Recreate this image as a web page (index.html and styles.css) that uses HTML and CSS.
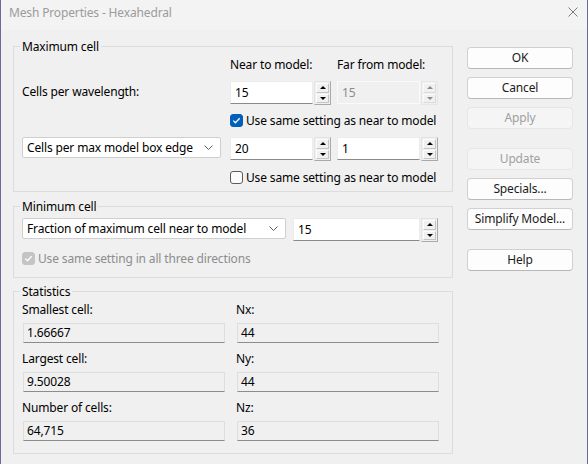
FILE: index.html
```html
<!DOCTYPE html>
<html>
<head>
<meta charset="utf-8">
<title>Mesh Properties - Hexahedral</title>
<link rel="stylesheet" href="styles.css">
</head>
<body>
<div class="window">
  <div class="titlebar">
    <span class="title">Mesh Properties - Hexahedral</span>
    <svg class="close" width="10" height="10" viewBox="0 0 10 10"><path d="M0.5 0.5L9.5 9.5M9.5 0.5L0.5 9.5" stroke="#7c7c7c" stroke-width="1" fill="none"/></svg>
  </div>
  <div class="content">
    <div class="groups">
      <fieldset class="group g-max">
        <legend>Maximum cell</legend>
        <div class="max-grid">
          <div></div>
          <div class="hdr">Near to model:</div>
          <div class="hdr">Far from model:</div>

          <div class="lbl">Cells per wavelength:</div>
          <div class="spin">
            <div class="edit">15</div>
            <div class="spinbtns"><span class="sb"><i class="up"></i></span><span class="sb"><i class="down"></i></span></div>
          </div>
          <div class="spin disabled">
            <div class="edit">15</div>
            <div class="spinbtns"><span class="sb"><i class="up"></i></span><span class="sb"><i class="down"></i></span></div>
          </div>

          <div></div>
          <div class="check span2">
            <span class="box on"><svg width="11" height="11" viewBox="0 0 11 11"><path d="M2.3 5.6L4.4 7.7L8.7 3.2" stroke="#fff" stroke-width="1.3" fill="none"/></svg></span>
            <span>Use same setting as near to model</span>
          </div>

          <div class="combo w199">
            <span>Cells per max model box edge</span>
            <svg width="9" height="5" viewBox="0 0 9 5"><path d="M0.5 0.5L4.5 4.5L8.5 0.5" stroke="#5f5f5f" fill="none"/></svg>
          </div>
          <div class="spin">
            <div class="edit">20</div>
            <div class="spinbtns"><span class="sb"><i class="up"></i></span><span class="sb"><i class="down"></i></span></div>
          </div>
          <div class="spin">
            <div class="edit">1</div>
            <div class="spinbtns"><span class="sb"><i class="up"></i></span><span class="sb"><i class="down"></i></span></div>
          </div>

          <div></div>
          <div class="check span2">
            <span class="box"></span>
            <span>Use same setting as near to model</span>
          </div>
        </div>
      </fieldset>

      <fieldset class="group g-min">
        <legend>Minimum cell</legend>
        <div class="min-grid">
          <div class="combo w264">
            <span>Fraction of maximum cell near to model</span>
            <svg width="9" height="5" viewBox="0 0 9 5"><path d="M0.5 0.5L4.5 4.5L8.5 0.5" stroke="#5f5f5f" fill="none"/></svg>
          </div>
          <div class="spin wide">
            <div class="edit">15</div>
            <div class="spinbtns"><span class="sb"><i class="up"></i></span><span class="sb"><i class="down"></i></span></div>
          </div>
          <div class="check dis span2">
            <span class="box on"><svg width="11" height="11" viewBox="0 0 11 11"><path d="M2.3 5.6L4.4 7.7L8.7 3.2" stroke="#fff" stroke-width="1.3" fill="none"/></svg></span>
            <span>Use same setting in all three directions</span>
          </div>
        </div>
      </fieldset>

      <fieldset class="group g-stats">
        <legend>Statistics</legend>
        <div class="stats-grid">
          <div class="stat"><div class="lbl">Smallest cell:</div><div class="ro">1.66667</div></div>
          <div class="stat"><div class="lbl">Nx:</div><div class="ro">44</div></div>
          <div class="stat"><div class="lbl">Largest cell:</div><div class="ro">9.50028</div></div>
          <div class="stat"><div class="lbl">Ny:</div><div class="ro">44</div></div>
          <div class="stat"><div class="lbl">Number of cells:</div><div class="ro">64,715</div></div>
          <div class="stat"><div class="lbl">Nz:</div><div class="ro">36</div></div>
        </div>
      </fieldset>
    </div>

    <div class="buttons">
      <div class="btn">OK</div>
      <div class="btn">Cancel</div>
      <div class="btn disabled">Apply</div>
      <div class="btn disabled sep">Update</div>
      <div class="btn">Specials...</div>
      <div class="btn">Simplify Model...</div>
      <div class="btn sep">Help</div>
    </div>
  </div>
</div>
</body>
</html>
```
FILE: styles.css
```css
* { box-sizing: border-box; }
html, body { margin: 0; padding: 0; }
body {
  font-family: "Noto Sans", "Open Sans", sans-serif;
  font-size: 12px;
  letter-spacing: -0.15px;
  color: #000;
  background: #f0f0f0;
}
.window {
  width: 588px;
  height: 464px;
  background: #f0f0f0;
  border-left: 1px solid #6d6a9a;
  border-right: 1px solid #6d6a9a;
  display: flex;
  flex-direction: column;
}
.titlebar {
  height: 30px;
  flex: none;
  background: #f3f3f3;
  display: flex;
  align-items: center;
  justify-content: space-between;
  padding: 0 9px 0 8px;
  color: #9b9b9b;
}
.title { line-height: 16px; margin-top: -4px; }
.close { margin-top: -6px; }

.content {
  display: flex;
  gap: 14px;
  padding: 8px 0 0 12px;
}
.groups {
  width: 440px;
  display: flex;
  flex-direction: column;
}
fieldset.group {
  margin: 0;
  min-width: 0;
  border: 1px solid #dcdcdc;
  padding: 2px 8px 7px 8px;
}
fieldset.group legend {
  padding: 0 2px;
  margin-left: -2px;
  height: 17px;
  line-height: 17px;
}
.g-min { margin-top: 6px !important; padding: 3px 8px 12px 8px !important; }
.g-stats { margin-top: 5px !important; padding: 2px 8px 12px 8px !important; }

.lbl, .hdr { line-height: 16px; height: 16px; white-space: nowrap; }

/* Maximum cell grid */
.max-grid {
  display: grid;
  grid-template-columns: 208px 107px 101px;
  grid-template-rows: 24px 32px 24px 33px 14px;
  align-items: start;
}
.max-grid > .lbl { margin-top: 3px; }
.span2 { grid-column: span 2; }

/* spin control */
.spin { display: flex; gap: 1px; height: 24px; }
.edit {
  width: 83px;
  height: 23px;
  background: #fff;
  border: 1px solid #ececec;
  border-bottom: 1px solid #8a8a8a;
  padding-left: 4px;
  line-height: 21px;
}
.spin.wide .edit { width: 127px; }
.spinbtns {
  width: 17px;
  height: 24px;
  display: flex;
  flex-direction: column;
  border: 1px solid #a9a9a9;
  border-top-color: #e3e3e3;
  border-left-color: #e3e3e3;
  background: #f0f0f0;
  padding: 1px;
  gap: 1px;
}
.sb {
  flex: 1;
  border: 1px solid #c4c4c4;
  border-top-color: #fdfdfd;
  border-left-color: #fdfdfd;
  background: #f0f0f0;
  display: flex;
  align-items: center;
  justify-content: center;
}
.sb i { width: 0; height: 0; border-left: 3px solid transparent; border-right: 3px solid transparent; }
.sb i.up { border-bottom: 3px solid #000; }
.sb i.down { border-top: 3px solid #000; }
.spin.disabled .edit {
  background: #f0f0f0;
  border: 1px solid #fafafa;
  color: #8c8c8c;
}
.spin.disabled .spinbtns { border-color: #e6e6e6; }
.spin.disabled .sb { border-color: #dadada; border-top-color: #fafafa; border-left-color: #fafafa; }
.spin.disabled .sb i.up { border-bottom-color: #8a8a8a; }
.spin.disabled .sb i.down { border-top-color: #8a8a8a; }

/* checkbox */
.check { display: flex; align-items: center; gap: 3px; height: 14px; white-space: nowrap; }
.box {
  width: 13px;
  height: 13px;
  flex: none;
  border: 1px solid #5c5c5c;
  border-radius: 3px;
  background: #fbfbfb;
  display: flex;
  align-items: center;
  justify-content: center;
}
.box.on { background: #005fb8; border-color: #005fb8; }
.check.dis { color: #8d8d8d; }
.check.dis .box { background: #c4c4c4; border-color: #c4c4c4; }

/* combo */
.combo {
  height: 21px;
  background: #fff;
  border: 1px solid #cfcfcf;
  border-radius: 2px;
  display: flex;
  align-items: center;
  justify-content: space-between;
  padding: 0 7px 0 4px;
  white-space: nowrap;
}
.w199 { width: 199px; }
.w264 { width: 264px; }

/* Minimum cell grid */
.min-grid {
  display: grid;
  grid-template-columns: 271px 145px;
  grid-template-rows: 33px 14px;
  align-items: start;
}

/* Statistics */
.stats-grid {
  display: grid;
  grid-template-columns: 214px 202px;
  row-gap: 8px;
}
.stat { display: flex; flex-direction: column; gap: 5px; }
.ro {
  width: 202px;
  height: 20px;
  margin-left: 1px;
  background: #f0f0f0;
  border: 1px solid #dedede;
  border-bottom: 1px solid #8c8c8c;
  padding-left: 3px;
  line-height: 18px;
}

/* buttons */
.buttons {
  width: 106px;
  display: flex;
  flex-direction: column;
  gap: 8px;
  padding-top: 9px;
}
.btn {
  height: 22px;
  background: #fdfdfd;
  border: 1px solid #d0d0d0;
  border-bottom-color: #b8b8b8;
  border-radius: 4px;
  text-align: center;
  line-height: 20px;
  color: #1b1b1b;
}
.btn.disabled {
  background: #f5f5f5;
  border-color: #e6e6e6;
  color: #a0a0a0;
}
.btn.sep { margin-top: 11px; }
```
